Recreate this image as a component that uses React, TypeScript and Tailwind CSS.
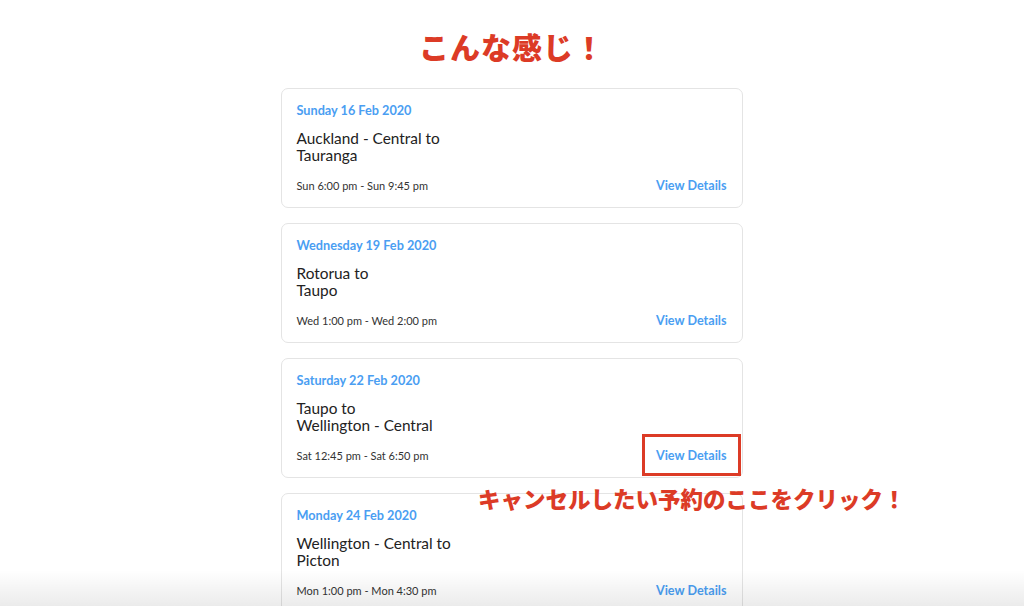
import React from "react";

type Trip = { date: string; l1: string; l2: string; time: string };

const trips: Trip[] = [
  { date: "Sunday 16 Feb 2020", l1: "Auckland - Central to", l2: "Tauranga", time: "Sun 6:00 pm - Sun 9:45 pm" },
  { date: "Wednesday 19 Feb 2020", l1: "Rotorua to", l2: "Taupo", time: "Wed 1:00 pm - Wed 2:00 pm" },
  { date: "Saturday 22 Feb 2020", l1: "Taupo to", l2: "Wellington - Central", time: "Sat 12:45 pm - Sat 6:50 pm" },
  { date: "Monday 24 Feb 2020", l1: "Wellington - Central to", l2: "Picton", time: "Mon 1:00 pm - Mon 4:30 pm" },
];

function Card({ t, highlight }: { t: Trip; highlight?: boolean }) {
  return (
    <div className="relative h-[120px] shrink-0 rounded-[7px] border border-[#e4e4e4] bg-white pl-[15px] pr-[15px] pt-[13px]">
      <div className="text-[12.7px] leading-[16px] font-bold text-[#4a9ef2]">{t.date}</div>
      <div className="mt-[12px] text-[15.4px] leading-[17px] text-[#222]">
        <div>{t.l1}</div>
        <div>{t.l2}</div>
      </div>
      <div className="mt-[14px] flex items-center justify-between">
        <span className="text-[11px] leading-[14px] text-[#333]">{t.time}</span>
        <span className="relative mt-[1px] text-[12.6px] leading-[14px] font-bold text-[#4a9ef2]">
          View Details
          {highlight && (
            <span className="absolute left-[-14px] top-[-15px] h-[42px] w-[99px] border-[3px] border-[#dc3b26]" />
          )}
        </span>
      </div>
    </div>
  );
}

export default function App() {
  return (
    <div
      className="relative h-[606px] w-[1024px] overflow-hidden bg-white"
      style={{ fontFamily: "Lato, 'Noto Sans', sans-serif" }}
    >
      <div className="flex flex-col items-center">
        <div
          className="mt-[26px] h-[40px] text-[30px] leading-[40px] font-black tracking-[1px] text-[#dc3b26]"
          style={{ fontFamily: "'Noto Sans CJK JP', sans-serif" }}
        >
          こんな感じ！
        </div>
        <div className="mt-[22px] ml-[-1px] flex w-[462px] flex-col gap-[15px]">
          {trips.map((t, i) => (
            <React.Fragment key={i}>
              <Card t={t} highlight={i === 2} />
            </React.Fragment>
          ))}
        </div>
      </div>
      <div
        className="absolute left-[478px] top-[483px] text-[22.5px] leading-[30px] font-black text-[#dc3b26]"
        style={{ fontFamily: "'Noto Sans CJK JP', sans-serif" }}
      >
        キャンセルしたい予約のここをクリック！
      </div>
      <div className="pointer-events-none absolute bottom-0 left-0 h-[36px] w-full bg-gradient-to-b from-[rgba(0,0,0,0)] to-[rgba(0,0,0,0.08)]" />
    </div>
  );
}
